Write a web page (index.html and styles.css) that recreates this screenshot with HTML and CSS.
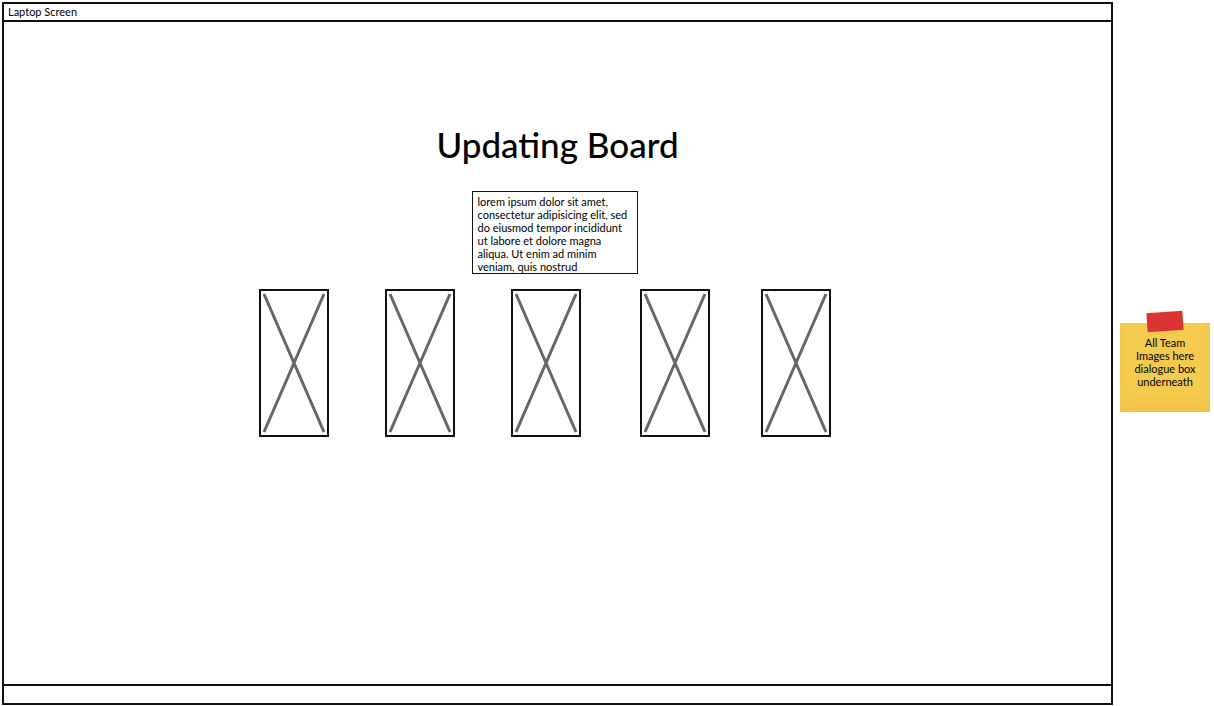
FILE: index.html
```html
<!DOCTYPE html>
<html lang="en">
<head>
    <meta charset="UTF-8">
    <meta name="viewport" content="width=device-width, initial-scale=1.0">
    <title>Laptop Screen - Updating Board</title>
    <link rel="stylesheet" href="styles.css">
</head>
<body>
    <div class="screen">
        <div class="screen-bar">Laptop Screen</div>

        <div class="screen-body">
            <h1 class="board-title">Updating Board</h1>

            <div class="info-box">
                lorem ipsum dolor sit amet, consectetur adipisicing elit, sed do eiusmod tempor incididunt ut labore et dolore magna aliqua. Ut enim ad minim veniam, quis nostrud
            </div>

            <div class="team-row">
                <div class="team-image">
                    <svg viewBox="0 0 66 144" preserveAspectRatio="none"><path d="M3 3 L63 141 M63 3 L3 141"/></svg>
                </div>
                <div class="team-image">
                    <svg viewBox="0 0 66 144" preserveAspectRatio="none"><path d="M3 3 L63 141 M63 3 L3 141"/></svg>
                </div>
                <div class="team-image">
                    <svg viewBox="0 0 66 144" preserveAspectRatio="none"><path d="M3 3 L63 141 M63 3 L3 141"/></svg>
                </div>
                <div class="team-image">
                    <svg viewBox="0 0 66 144" preserveAspectRatio="none"><path d="M3 3 L63 141 M63 3 L3 141"/></svg>
                </div>
                <div class="team-image">
                    <svg viewBox="0 0 66 144" preserveAspectRatio="none"><path d="M3 3 L63 141 M63 3 L3 141"/></svg>
                </div>
            </div>
        </div>

        <div class="screen-footer"></div>
    </div>

    <!-- sticky note beside the screen -->
    <div class="sticky-note">
        <span class="sticky-tape"></span>
        <p>All Team Images here dialogue box underneath</p>
    </div>
</body>
</html>
```

FILE: styles.css
```css
body {
    margin: 0;
    background: white;
    font-family: "Lato", "Open Sans", sans-serif;
    color: #000;
}

.screen {
    margin: 2px 0 0 2px;
    width: 1107px;
    height: 699px;
    border: 2px solid #111;
    display: flex;
    flex-direction: column;
}

.screen-bar {
    height: 16px;
    border-bottom: 2px solid #111;
    font-size: 11px;
    line-height: 16px;
    padding-left: 4px;
}

.screen-body {
    flex: 1;
    display: flex;
    flex-direction: column;
    align-items: center;
}

.screen-footer {
    height: 17px;
    border-top: 2px solid #111;
}

.board-title {
    margin: 101px 0 0 0;
    font-size: 35px;
    font-weight: 500;
    line-height: 42px;
}

.info-box {
    margin: 26px 6px 0 0;
    width: 156px;
    height: 78px;
    padding: 3px 3px 0 5px;
    border: 1.5px solid #111;
    font-size: 11px;
    line-height: 13px;
    overflow: hidden;
    box-sizing: content-box;
}

.team-row {
    align-self: flex-start;
    display: flex;
    margin-top: 15px;
    padding-left: 255px;
}

.team-image {
    width: 66px;
    height: 144px;
    border: 2px solid #111;
    margin-right: 56px;
}

.team-image:nth-child(3) {
    margin-right: 59px;
}

.team-image:nth-child(4) {
    margin-right: 51px;
}

.team-image svg {
    display: block;
    width: 100%;
    height: 100%;
}

.team-image path {
    stroke: #666;
    stroke-width: 3;
    fill: none;
}

.sticky-note {
    position: absolute;
    left: 1120px;
    top: 323px;
    width: 90px;
    height: 89px;
    background: #f4cb4f;
    box-shadow: inset 0 -12px 10px rgba(230, 180, 50, 0.25);
}

.sticky-tape {
    position: absolute;
    left: 27px;
    top: -11px;
    width: 36px;
    height: 19px;
    background: #dc3333;
    transform: rotate(-4deg);
}

.sticky-note p {
    margin: 13px 12px 0 12px;
    font-size: 11px;
    line-height: 13px;
    text-align: center;
}
```
